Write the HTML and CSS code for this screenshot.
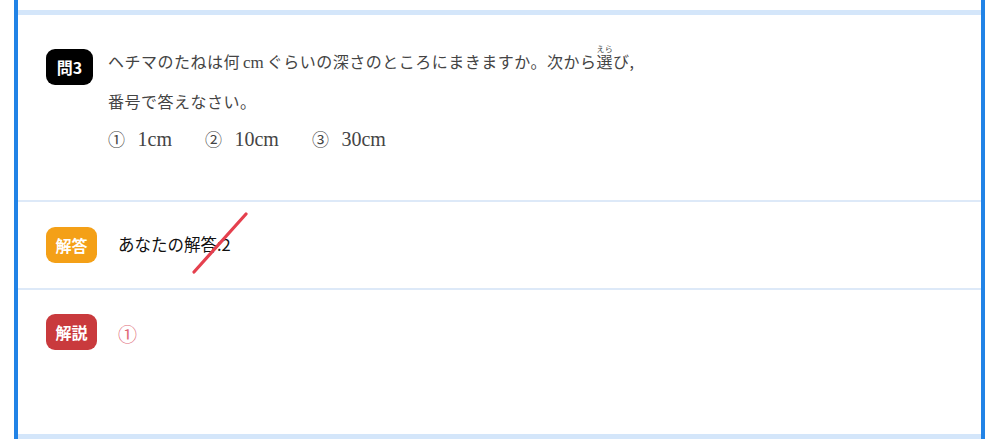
FILE: index.html
```html
<!DOCTYPE html>
<html lang="ja">
<head>
<meta charset="utf-8">
<link rel="stylesheet" href="styles.css">
</head>
<body>
<div class="frame">
  <div class="top-space"></div>
  <div class="bar"></div>
  <section class="question">
    <div class="badge badge-q">問3</div>
    <div class="q-body">
      <div class="q-line q-line1">ヘチマのたねは何<span class="unit">cm</span>ぐらいの深さのところにまきますか。次から<ruby>選<rt>えら</rt></ruby>び,</div>
      <div class="q-line">番号で答えなさい。</div>
      <div class="q-line options">
        <span class="opt"><span class="num">①</span><span class="unit">1cm</span></span>
        <span class="opt"><span class="num">②</span><span class="unit">10cm</span></span>
        <span class="opt"><span class="num">③</span><span class="unit">30cm</span></span>
      </div>
    </div>
  </section>
  <div class="divider"></div>
  <section class="answer">
    <div class="badge badge-a">解答</div>
    <div class="a-text">あなたの解答:2</div>
    <svg class="slash" width="60" height="66" viewBox="0 0 60 66">
      <line x1="4" y1="62" x2="56" y2="4" stroke="#e5404e" stroke-width="3.2" stroke-linecap="round"/>
    </svg>
  </section>
  <div class="divider"></div>
  <section class="comment">
    <div class="badge badge-c">解説</div>
    <div class="c-text">①</div>
  </section>
  <div class="bar"></div>
</div>
</body>
</html>
```
FILE: styles.css
```css
html, body {
  margin: 0;
  padding: 0;
  background: #ffffff;
}
body {
  font-family: "Noto Sans CJK JP", "Noto Sans", sans-serif;
  overflow: hidden;
  height: 439px;
}
.frame {
  margin-left: 14px;
  width: 963px;
  border-left: 4px solid #2183e6;
  border-right: 4px solid #2183e6;
  height: 460px;
  display: flex;
  flex-direction: column;
}
.top-space {
  height: 10px;
  flex: none;
}
.bar {
  height: 5px;
  background: #d4e6fa;
  flex: none;
}
.divider {
  height: 2px;
  background: #dde9f8;
  flex: none;
}
.badge {
  flex: none;
  height: 36px;
  border-radius: 9px;
  color: #ffffff;
  font-weight: 700;
  font-size: 16px;
  display: flex;
  align-items: center;
  justify-content: center;
  box-sizing: border-box;
}
.badge-q {
  width: 47px;
  background: #000000;
}
.badge-a {
  width: 51px;
  background: #f4a017;
}
.badge-c {
  width: 51px;
  background: #c93a3d;
}
.question {
  height: 185px;
  box-sizing: border-box;
  padding: 34px 28px 0 28px;
  display: flex;
  gap: 15px;
  flex: none;
}
.q-body {
  color: #444444;
  font-size: 16px;
  letter-spacing: 0.5px;
  margin-top: -8px;
}
.q-line {
  height: 40px;
  line-height: 40px;
  white-space: nowrap;
}
.unit {
  font-family: "Liberation Serif", serif;
  font-size: 17px;
  letter-spacing: 0;
  margin: 0 3px;
}
ruby rt {
  font-size: 8px;
  letter-spacing: 0;
}
.options {
  display: flex;
  gap: 33px;
  margin-top: -2px;
}
.opt {
  display: flex;
  align-items: baseline;
}
.num {
  font-size: 17px;
  margin-right: 12px;
}
.opt .unit {
  margin: 0;
  font-size: 20px;
}
.answer {
  height: 86px;
  box-sizing: border-box;
  padding: 0 28px;
  display: flex;
  align-items: center;
  gap: 21px;
  position: relative;
  flex: none;
}
.a-text {
  font-size: 16.5px;
  color: #111111;
  margin-top: -2px;
}
.slash {
  position: absolute;
  left: 172px;
  top: 8px;
}
.comment {
  height: 144px;
  box-sizing: border-box;
  padding: 24px 28px 0 28px;
  display: flex;
  align-items: flex-start;
  gap: 21px;
  flex: none;
}
.c-text {
  color: #e06a78;
  font-size: 19px;
  line-height: 40px;
}
```
